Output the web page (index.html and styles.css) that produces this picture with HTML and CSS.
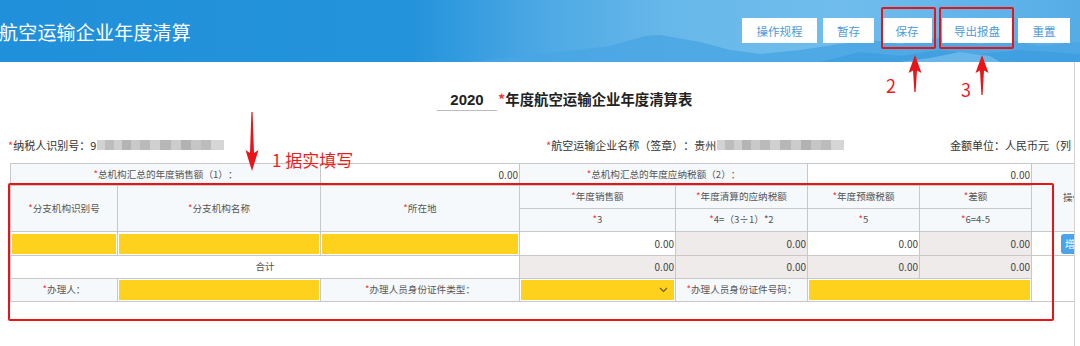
FILE: index.html
```html
<!DOCTYPE html>
<html lang="zh-CN">
<head>
    <meta charset="UTF-8">
    <meta name="viewport" content="width=device-width, initial-scale=1.0">
    <title>航空运输企业年度清算</title>
    <link rel="stylesheet" href="styles.css">
</head>

<body>
    <div class="header">
        <svg class="header-bg" width="1080" height="62" viewBox="0 0 1080 62">
            <defs>
                <linearGradient id="sky" x1="0" y1="0" x2="1" y2="0">
                    <stop offset="0" stop-color="#2190da"/>
                    <stop offset="0.38" stop-color="#2393db"/>
                    <stop offset="0.5" stop-color="#4ca8e4"/>
                    <stop offset="0.62" stop-color="#67b8ea"/>
                    <stop offset="0.78" stop-color="#70bdec"/>
                    <stop offset="0.92" stop-color="#5fb3e9"/>
                    <stop offset="1" stop-color="#56ade6"/>
                </linearGradient>
            </defs>
            <rect width="1080" height="62" fill="url(#sky)"/>
            <path d="M470 62 L560 52 L610 46 L645 36 L660 35 L700 42 L730 50 L760 54 L800 50 L840 44 L870 40 L900 44 L940 38 L980 44 L1010 40 L1040 46 L1080 42 L1080 62 Z" fill="#4aa6e3" opacity="0.85"/>
            <path d="M820 62 L860 52 L900 56 L940 50 L980 54 L1020 50 L1080 54 L1080 62 Z" fill="#3d9ddf" opacity="0.8"/>
            <path d="M900 62 L930 58 L960 52 L990 56 L1000 62 Z" fill="#86c6ef" opacity="0.6"/>
        </svg>
        <h1 class="header-title">航空运输企业年度清算</h1>
        <div class="toolbar">
            <button class="tool-btn w75">操作规程</button>
            <button class="tool-btn w51">暂存</button>
            <button class="tool-btn w50 ml2">保存</button>
            <button class="tool-btn w70 ml4">导出报盘</button>
            <button class="tool-btn w52">重置</button>
        </div>
    </div>

    <div class="page">
        <div class="content">
            <div class="title-row">
                <span class="year">2020</span>
                <span class="title-text"><span class="star">*</span>年度航空运输企业年度清算表</span>
            </div>

            <div class="info-row">
                <div class="info-item"><span class="star">*</span>纳税人识别号：9<span class="mosaic"></span></div>
                <div class="info-item"><span class="star">*</span>航空运输企业名称（签章）：贵州<span class="mosaic"></span></div>
                <div class="info-item">金额单位：人民币元（列</div>
            </div>

            <table class="sheet">
                <colgroup>
                    <col style="width:107px">
                    <col style="width:203px">
                    <col style="width:199px">
                    <col style="width:156px">
                    <col style="width:132px">
                    <col style="width:112px">
                    <col style="width:112px">
                    <col style="width:78px">
                </colgroup>
                <tr class="r22">
                    <td class="label" colspan="2"><span class="star">*</span>总机构汇总的年度销售额（1）：</td>
                    <td class="num">0.00</td>
                    <td class="label" colspan="2"><span class="star">*</span>总机构汇总的年度应纳税额（2）：</td>
                    <td class="num" colspan="2">0.00</td>
                    <td class="label op" rowspan="3">操作</td>
                </tr>
                <tr class="r23">
                    <td class="label" rowspan="2"><span class="star">*</span>分支机构识别号</td>
                    <td class="label" rowspan="2"><span class="star">*</span>分支机构名称</td>
                    <td class="label" rowspan="2"><span class="star">*</span>所在地</td>
                    <td class="label"><span class="star">*</span>年度销售额</td>
                    <td class="label"><span class="star">*</span>年度清算的应纳税额</td>
                    <td class="label"><span class="star">*</span>年度预缴税额</td>
                    <td class="label"><span class="star">*</span>差额</td>
                </tr>
                <tr class="r23">
                    <td class="label"><span class="star">*</span>3</td>
                    <td class="label"><span class="star">*</span>4=（3÷1）*2</td>
                    <td class="label"><span class="star">*</span>5</td>
                    <td class="label"><span class="star">*</span>6=4-5</td>
                </tr>
                <tr class="r24">
                    <td class="field"><div class="fill"></div></td>
                    <td class="field"><div class="fill"></div></td>
                    <td class="field"><div class="fill"></div></td>
                    <td class="num">0.00</td>
                    <td class="num grey">0.00</td>
                    <td class="num">0.00</td>
                    <td class="num grey">0.00</td>
                    <td class="op-cell"><button class="add-btn">增加</button></td>
                </tr>
                <tr class="r23">
                    <td class="total" colspan="3">合计</td>
                    <td class="num grey">0.00</td>
                    <td class="num grey">0.00</td>
                    <td class="num grey">0.00</td>
                    <td class="num grey">0.00</td>
                    <td class="op-cell" rowspan="2"></td>
                </tr>
                <tr class="r23">
                    <td class="label"><span class="star">*</span>办理人：</td>
                    <td class="field"><div class="fill"></div></td>
                    <td class="label"><span class="star">*</span>办理人员身份证件类型：</td>
                    <td class="field">
                        <div class="fill select">
                            <svg width="9" height="6" viewBox="0 0 9 6"><path d="M1 1 L4.5 4.5 L8 1" fill="none" stroke="#6b5a1a" stroke-width="1.1"/></svg>
                        </div>
                    </td>
                    <td class="label"><span class="star">*</span>办理人员身份证件号码：</td>
                    <td class="field" colspan="2"><div class="fill"></div></td>
                </tr>
            </table>
        </div>
        <div class="scrollbar"></div>
    </div>

    <!-- annotations drawn over the screenshot -->
    <div class="mark-box box-save"></div>
    <div class="mark-box box-export"></div>
    <div class="mark-box box-table"></div>
    <svg class="arrows" width="1080" height="346" viewBox="0 0 1080 346">
        <polygon points="251.4,112 252.6,112 254,153 258.5,150 252,171 245.5,150 250,153" fill="#e8141a"/>
        <polygon points="915,55 921.5,73 917,70.5 915.6,92 914.4,92 913,70.5 908.5,73" fill="#e8141a"/>
        <polygon points="982,55 988.5,73 984,70.5 982.6,95 981.4,95 980,70.5 975.5,73" fill="#e8141a"/>
    </svg>
    <span class="note note-1">1 据实填写</span>
    <span class="note note-2">2</span>
    <span class="note note-3">3</span>
</body>
</html>
```

FILE: styles.css
```css
body {
    margin: 0;
    width: 1080px;
    height: 346px;
    overflow: hidden;
    position: relative;
    background: #fff;
    font-family: "Noto Sans CJK SC", "Noto Sans", sans-serif;
    color: #333;
    text-spacing-trim: space-all;
}
.header {
    position: relative;
    height: 62px;
    display: flex;
    align-items: center;
    justify-content: space-between;
    padding-right: 10px;
    overflow: hidden;
}
.header-bg {
    position: absolute;
    left: 0;
    top: 0;
}
.header-title {
    position: relative;
    margin: 0 0 0 -1px;
    font-size: 19px;
    font-weight: 400;
    color: #fff;
    letter-spacing: 0.2px;
}
.toolbar {
    position: relative;
    display: flex;
    gap: 6px;
    margin-top: -1px;
}
.tool-btn {
    height: 25px;
    padding: 0;
    border: none;
    background: #fff;
    color: #4d9bd9;
    font-family: inherit;
    font-size: 11.5px;
}
.w75 { width: 75px; }
.w51 { width: 51px; }
.w50 { width: 50px; }
.w70 { width: 70px; }
.w52 { width: 52px; }
.ml2 { margin-left: 2px; }
.ml4 { margin-left: 4px; }

.page {
    display: flex;
    height: 284px;
}
.content {
    width: 1074px;
    overflow: hidden;
    border-right: 1px solid #d4d4d4;
}
.scrollbar {
    flex: 1;
    background: #fff;
}
.star {
    color: #f23a3a;
}

.title-row {
    display: flex;
    align-items: flex-end;
    height: 22px;
    margin-top: 27px;
    padding-left: 437px;
}
.year {
    width: 60px;
    text-align: center;
    border-bottom: 1px solid #bbb;
    font-family: "Liberation Sans", Arial, sans-serif;
    font-weight: 700;
    font-size: 15px;
    line-height: 20px;
    color: #222;
}
.title-text {
    margin-left: 1px;
    font-weight: 700;
    font-size: 14.4px;
    line-height: 20px;
    color: #222;
    margin-bottom: 2px;
}

.info-row {
    display: grid;
    grid-template-columns: 538px 404px 1fr;
    padding-left: 8px;
    margin-top: 25px;
    height: 18px;
    align-items: center;
    font-size: 11px;
    white-space: nowrap;
    color: #333;
}
.info-item {
    display: flex;
    align-items: center;
}
.mosaic {
    display: inline-block;
    width: 127px;
    height: 10px;
    margin-left: 1px;
    background: linear-gradient(90deg,
        #d2d2d2 0 6%, #bdbdbd 6% 13%, #cfcfcf 13% 20%, #b4b4b4 20% 27%,
        #c9c9c9 27% 34%, #bababa 34% 42%, #d0d0d0 42% 50%, #b7b7b7 50% 58%,
        #cccccc 58% 66%, #b2b2b2 66% 74%, #c6c6c6 74% 82%, #bcbcbc 82% 90%, #d6d6d6 90% 100%);
}

.sheet {
    margin: 9px 0 0 10px;
    width: 1099px;
    table-layout: fixed;
    border-collapse: collapse;
    font-size: 9.6px;
    color: #555;
}
.sheet td {
    border: 1px solid #c8c8c8;
    padding: 0 1px;
    text-align: center;
    white-space: nowrap;
    overflow: hidden;
    line-height: 1;
}
.r22 { height: 22px; }
.r23 { height: 23px; }
.r24 { height: 24px; }
.sheet .label {
    background: #f6f9fb;
}
.sheet .num {
    text-align: right;
    padding-right: 1px;
    font-size: 10px;
    color: #444;
}
.sheet .grey {
    background: #efebeb;
}
.sheet .total {
    background: #fff;
}
.sheet .field {
    padding: 1px;
}
.fill {
    height: 20px;
    background: #fed11c;
}
.select {
    display: flex;
    align-items: center;
    justify-content: flex-end;
    padding-right: 6px;
}
.sheet .op {
    text-align: left;
    padding-left: 31px;
}
.sheet .op-cell {
    text-align: left;
    padding-left: 29px;
}
.add-btn {
    height: 20px;
    padding: 0 4px;
    border: none;
    border-radius: 3px;
    background: #4aa4ea;
    color: #fff;
    font-family: inherit;
    font-size: 10px;
}

.mark-box {
    position: absolute;
    border: 2px solid #e8141a;
    border-radius: 2px;
}
.box-save {
    left: 881px;
    top: 7px;
    width: 51px;
    height: 38px;
}
.box-export {
    left: 939px;
    top: 7px;
    width: 71px;
    height: 38px;
}
.box-table {
    left: 8px;
    top: 183px;
    width: 1042px;
    height: 134px;
}
.arrows {
    position: absolute;
    left: 0;
    top: 0;
    pointer-events: none;
}
.note {
    position: absolute;
    color: #ee1c1c;
    line-height: 1;
}
.note-1 {
    left: 272px;
    top: 151px;
    font-size: 17px;
}
.note-2 {
    left: 886px;
    top: 76px;
    font-size: 18px;
}
.note-3 {
    left: 961px;
    top: 80px;
    font-size: 18px;
}
```
